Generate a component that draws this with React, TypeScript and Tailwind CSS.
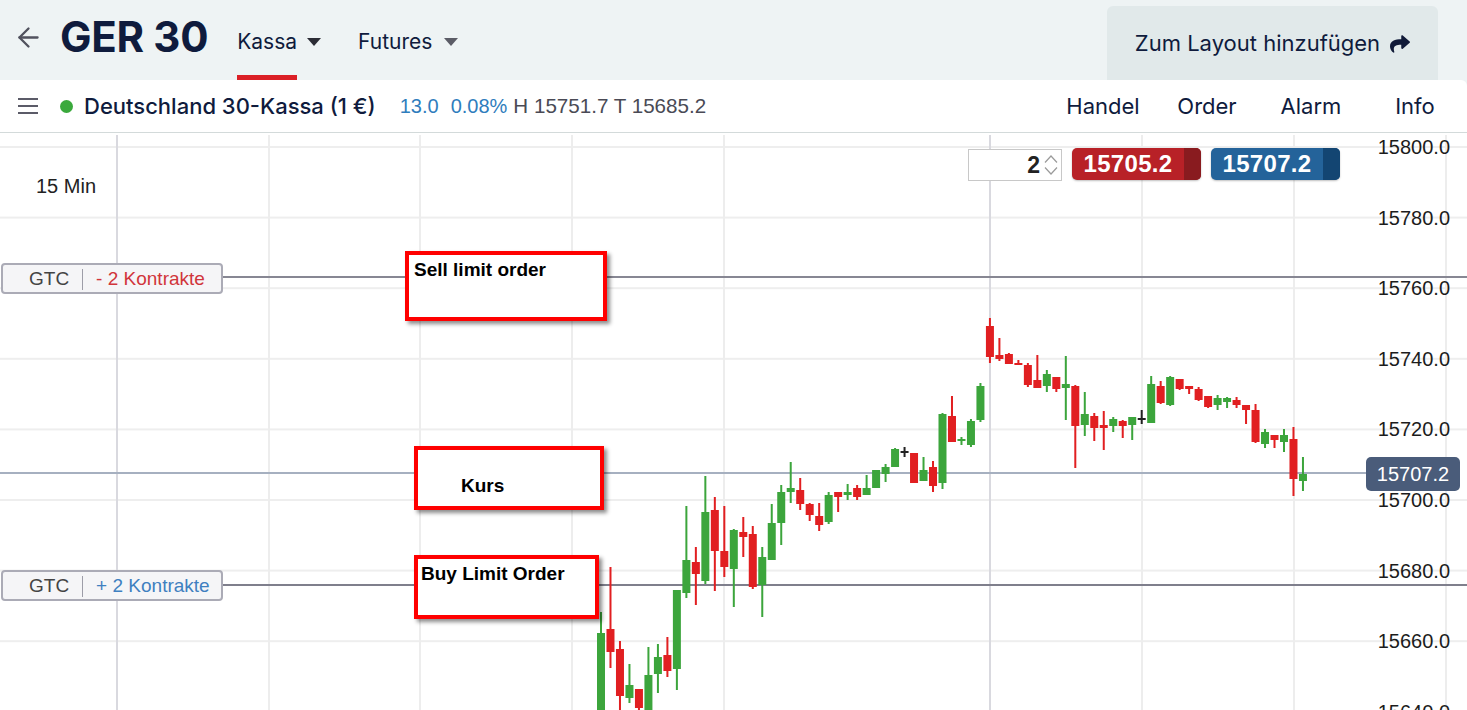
import { ArrowLeft } from 'lucide-react';
import { FaShare } from 'react-icons/fa';

type C = [string, number, number, number, number];
const candles: C[] = [
  ['g', 633, 720, 612, 720],
  ['r', 629, 652, 567, 668],
  ['r', 649, 696, 641, 720],
  ['g', 685, 698, 664, 703],
  ['r', 689, 708, 689, 720],
  ['g', 675, 720, 647, 720],
  ['g', 657, 674, 644, 693],
  ['r', 655, 671, 637, 677],
  ['g', 590, 669, 590, 690],
  ['g', 560, 593, 506, 598],
  ['r', 562, 574, 547, 605],
  ['g', 512, 581, 476, 584],
  ['r', 510, 551, 497, 591],
  ['r', 551, 567, 506, 577],
  ['g', 530, 569, 529, 607],
  ['r', 532, 537, 517, 557],
  ['r', 534, 587, 526, 589],
  ['g', 557, 585, 547, 617],
  ['g', 523, 560, 504, 560],
  ['g', 492, 523, 485, 545],
  ['g', 488, 492, 462, 503],
  ['r', 490, 504, 478, 510],
  ['r', 504, 515, 503, 521],
  ['r', 516, 525, 503, 531],
  ['g', 495, 522, 492, 524],
  ['r', 492, 497, 492, 512],
  ['g', 492, 495, 484, 500],
  ['r', 488, 497, 485, 500],
  ['g', 488, 495, 475, 495],
  ['g', 470, 488, 470, 488],
  ['g', 467, 474, 464, 482],
  ['g', 449, 467, 448, 467],
  ['d', 451, 453, 447, 457],
  ['r', 453, 483, 453, 483],
  ['g', 470, 481, 457, 481],
  ['r', 467, 486, 461, 492],
  ['g', 414, 483, 413, 489],
  ['r', 416, 442, 396, 442],
  ['g', 439, 441, 437, 445],
  ['g', 421, 445, 419, 447],
  ['g', 386, 420, 383, 422],
  ['r', 326, 357, 318, 363],
  ['r', 355, 359, 338, 361],
  ['r', 354, 364, 353, 364],
  ['r', 363, 365, 360, 365],
  ['r', 365, 385, 363, 387],
  ['r', 380, 388, 355, 388],
  ['g', 374, 386, 370, 392],
  ['r', 377, 389, 377, 392],
  ['g', 384, 388, 356, 420],
  ['r', 386, 426, 385, 468],
  ['g', 414, 425, 392, 436],
  ['r', 416, 428, 413, 441],
  ['r', 425, 428, 411, 450],
  ['g', 419, 426, 417, 432],
  ['r', 421, 426, 420, 438],
  ['g', 417, 425, 417, 440],
  ['d', 418, 420, 410, 424],
  ['g', 384, 423, 376, 423],
  ['r', 386, 403, 381, 404],
  ['g', 377, 405, 376, 406],
  ['r', 379, 389, 379, 390],
  ['r', 386, 389, 386, 394],
  ['r', 389, 400, 387, 401],
  ['r', 396, 407, 396, 408],
  ['g', 398, 405, 395, 410],
  ['g', 398, 402, 397, 408],
  ['r', 400, 405, 397, 408],
  ['r', 405, 410, 405, 424],
  ['r', 410, 442, 404, 443],
  ['g', 432, 444, 429, 448],
  ['r', 435, 440, 435, 448],
  ['g', 435, 442, 429, 452],
  ['r', 439, 479, 427, 496],
  ['g', 474, 481, 457, 491],
];

const X0 = 597;
const DX = 9.486;
const colorOf = (c: string) => (c === 'g' ? '#3ca53c' : c === 'r' ? '#e11f21' : '#222222');

const prices = [15800, 15780, 15760, 15740, 15720, 15700, 15680, 15660, 15640];
const yOf = (p: number) => 147 + (15800 - p) * 3.53;
const vLines: [number, string][] = [
  [117, '#d9d9df'],
  [269, '#ededed'],
  [420, '#ededed'],
  [572, '#ededed'],
  [724, '#ededed'],
  [990, '#d9d9df'],
  [1142, '#ededed'],
  [1294, '#ededed'],
  [1446, '#ededed'],
];

function Triangle({ color }: { color: string }) {
  return (
    <svg width="14" height="8" viewBox="0 0 14 8">
      <path d="M0 0 L14 0 L7 8 Z" fill={color} />
    </svg>
  );
}

function Chart() {
  return (
    <svg className="absolute inset-0" width="1467" height="577" viewBox="0 133 1467 577">
      {prices.map((p) => (
        <rect key={p} x={0} y={yOf(p) - 1} width={1467} height={2} fill="#eeeeee" />
      ))}
      {vLines.map(([x, c]) => (
        <rect key={x} x={x - 1} y={135} width={2} height={580} fill={c} />
      ))}
      <rect x={222} y={276} width={1245} height={2} fill="#878793" />
      <rect x={0} y={472} width={1366} height={2} fill="#a6b0c0" />
      <rect x={222} y={584} width={1245} height={2} fill="#7f7f8c" />
      {candles.map(([c, t, b, h, l], i) => {
        const x = X0 + i * DX;
        const col = colorOf(c);
        if (c === 'd') {
          return (
            <g key={i}>
              <rect x={x + 3} y={h} width={2} height={l - h} fill={col} />
              <rect x={x} y={t} width={8} height={2} fill={col} />
            </g>
          );
        }
        return (
          <g key={i}>
            <rect x={x + 3} y={h} width={2} height={l - h} fill={col} />
            <rect x={x} y={t} width={8} height={Math.max(b - t, 2)} fill={col} />
          </g>
        );
      })}
      {prices.map((p) => (
        <text
          key={p}
          x={1450}
          y={yOf(p)}
          textAnchor="end"
          dominantBaseline="central"
          fontFamily="'Liberation Sans', Arial, sans-serif"
          fontSize={20}
          fill="#1c1c1c"
        >
          {p.toFixed(1)}
        </text>
      ))}
    </svg>
  );
}

function GtcLabel({ top, text, color }: { top: string; text: string; color: string }) {
  return (
    <div
      className={`absolute left-[1px] ${top} w-[222px] h-[31px] rounded-[4px] border-2 border-[#ababb6] bg-[#f5f5f7] flex items-center pl-[26px] pt-[2px] font-['Liberation_Sans',Arial,sans-serif] text-[19px]`}
    >
      <span className="text-[#444]">GTC</span>
      <span className="mx-[13px] w-[1px] h-[21px] bg-[#9d9da8]" />
      <span className={color}>{text}</span>
    </div>
  );
}

export default function App() {
  return (
    <div className="w-[1467px] h-[710px] overflow-hidden bg-[#eef3f4] font-['Inter',sans-serif] text-[#0f1b3d]">
      {/* Header */}
      <header className="h-[80px] flex items-stretch">
        <div className="flex items-center pl-[13px] pb-[6px]">
          <ArrowLeft size={31} strokeWidth={1.8} className="text-[#51525e]" />
          <h1 className="ml-[16px] text-[42px] font-bold leading-none tracking-[-0.3px]">GER 30</h1>
        </div>
        <nav className="flex ml-[29px] text-[21px]">
          <div className="flex items-stretch gap-[10px]">
            <div className="flex flex-col">
              <div className="flex-1 flex items-center pt-[8px]">Kassa</div>
              <div className="h-[5px] bg-[#db1f26]" />
            </div>
            <div className="flex items-center pt-[4px]">
              <Triangle color="#2b2c35" />
            </div>
          </div>
          <div className="flex items-stretch gap-[12px] ml-[37px]">
            <div className="flex flex-col">
              <div className="flex-1 flex items-center pt-[8px]">Futures</div>
              <div className="h-[5px]" />
            </div>
            <div className="flex items-center pt-[4px]">
              <Triangle color="#5b5c66" />
            </div>
          </div>
        </nav>
        <div className="ml-auto mr-[29px] mt-[6px] w-[331px] rounded-t-[6px] bg-[#e1e9ea] flex items-center justify-center gap-[10px] text-[22px] pt-[1px]">
          <span>Zum Layout hinzufügen</span>
          <FaShare size={20} className="text-[#101a38]" />
        </div>
      </header>

      {/* Sub header */}
      <div className="h-[53px] bg-white rounded-tr-[6px] border-b border-[#d3dada] flex items-center">
        <div className="ml-[18px] flex flex-col gap-[5px]">
          <span className="block w-[20px] h-[2px] bg-[#5b5b68]" />
          <span className="block w-[20px] h-[2px] bg-[#5b5b68]" />
          <span className="block w-[20px] h-[2px] bg-[#5b5b68]" />
        </div>
        <span className="ml-[22px] w-[13px] h-[13px] rounded-full bg-[#3aa93c]" />
        <span className="ml-[11px] text-[22px] font-medium">Deutschland 30-Kassa (1 €)</span>
        <div className="ml-[24px] flex items-center font-['Liberation_Sans',Arial,sans-serif] text-[20px]">
          <span className="text-[#2f7dbd]">13.0</span>
          <span className="ml-[12px] text-[#2f7dbd]">0.08%</span>
          <span className="ml-[6px] text-[#4a4a55] text-[20.6px]">H 15751.7 T 15685.2</span>
        </div>
        <nav className="ml-auto flex text-[22px]">
          <span className="w-[104px] text-center">Handel</span>
          <span className="w-[104px] text-center">Order</span>
          <span className="w-[104px] text-center">Alarm</span>
          <span className="w-[104px] text-center">Info</span>
        </nav>
      </div>

      {/* Chart */}
      <div className="relative h-[577px] bg-white">
        <Chart />

        <div className="absolute left-[36px] top-[38px] text-[20px] text-[#222] font-['Liberation_Sans',Arial,sans-serif]">
          15 Min
        </div>

        <GtcLabel top="top-[130px]" text="- 2 Kontrakte" color="text-[#d1353b]" />
        <GtcLabel top="top-[437px]" text="+ 2 Kontrakte" color="text-[#3f80c0]" />

        {/* order ticket */}
        <div className="absolute left-[968px] top-[15px] flex items-start gap-[10px] font-['Liberation_Sans',Arial,sans-serif]">
          <div className="mt-[1px] w-[94px] h-[32px] border border-[#c8c8c8] bg-white flex items-center justify-end pr-[3px]">
            <span className="text-[23px] font-bold text-[#222] leading-none">2</span>
            <div className="ml-[4px] flex flex-col gap-[2px]">
              <svg width="14" height="10" viewBox="0 0 14 10">
                <path d="M1 8.5 L7 2 L13 8.5" fill="none" stroke="#9a9a9a" strokeWidth="1.2" />
              </svg>
              <svg width="14" height="10" viewBox="0 0 14 10">
                <path d="M1 1.5 L7 8 L13 1.5" fill="none" stroke="#9a9a9a" strokeWidth="1.2" />
              </svg>
            </div>
          </div>
          <div className="w-[129px] h-[32px] rounded-[5px] bg-[#b82127] flex overflow-hidden shadow-[0_1px_2px_rgba(0,0,0,0.25)]">
            <span className="flex-1 flex items-center justify-center text-white font-bold text-[24px] tracking-[0.3px]">
              15705.2
            </span>
            <span className="w-[17px] bg-[#891b1f]" />
          </div>
          <div className="w-[129px] h-[32px] rounded-[5px] bg-[#24639a] flex overflow-hidden shadow-[0_1px_2px_rgba(0,0,0,0.25)]">
            <span className="flex-1 flex items-center justify-center text-white font-bold text-[24px] tracking-[0.3px]">
              15707.2
            </span>
            <span className="w-[17px] bg-[#134572]" />
          </div>
        </div>

        {/* current price tag */}
        <div className="absolute left-[1366px] top-[324px] w-[94px] h-[34px] rounded-[5px] bg-[#4a5c7a] flex items-center justify-center text-white text-[20px] font-['Liberation_Sans',Arial,sans-serif]">
          15707.2
        </div>

        {/* annotation boxes */}
        <div className="absolute left-[405px] top-[118px] w-[202px] h-[70px] border-4 border-[#ff0000] bg-white shadow-[3px_3px_4px_rgba(0,0,0,0.45)] pl-[5px] pt-[4px] font-['Liberation_Sans',Arial,sans-serif] font-bold text-[19px] leading-[22px] text-black">
          Sell limit order
        </div>
        <div className="absolute left-[414px] top-[313px] w-[190px] h-[64px] border-4 border-[#ff0000] bg-white shadow-[3px_3px_4px_rgba(0,0,0,0.45)] pl-[43px] pt-[25px] font-['Liberation_Sans',Arial,sans-serif] font-bold text-[19px] leading-[22px] text-black">
          Kurs
        </div>
        <div className="absolute left-[414px] top-[422px] w-[185px] h-[64px] border-4 border-[#ff0000] bg-white shadow-[3px_3px_4px_rgba(0,0,0,0.45)] pl-[3px] pt-[4px] font-['Liberation_Sans',Arial,sans-serif] font-bold text-[19px] leading-[22px] text-black">
          Buy Limit Order
        </div>
      </div>
    </div>
  );
}
